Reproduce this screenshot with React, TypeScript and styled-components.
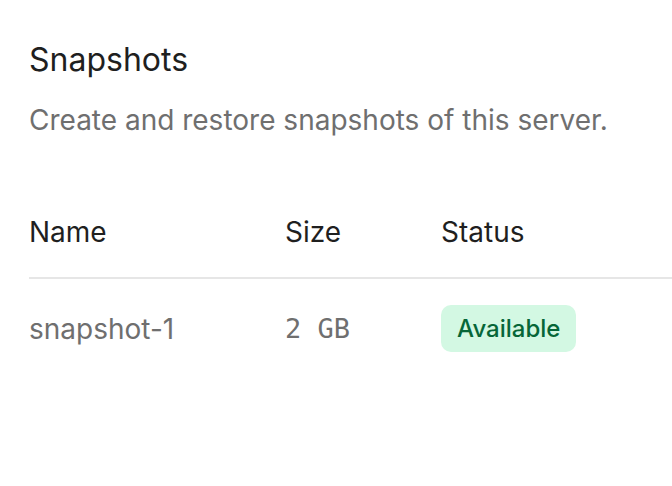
import styled, { createGlobalStyle } from 'styled-components'

const Global = createGlobalStyle`
  html, body {
    margin: 0;
    padding: 0;
    background: #ffffff;
  }
  body {
    font-family: Inter, "Noto Sans", sans-serif;
    -webkit-font-smoothing: antialiased;
  }
`

const snapshots = [
  { name: 'snapshot-1', size: '2 GB', status: 'Available' },
]

const Page = () => {
  return (
    <Wrapper>
      <Global />
      <Title>Snapshots</Title>
      <Description>Create and restore snapshots of this server.</Description>
      <Table>
        <thead>
          <tr>
            <Th $width={256}>Name</Th>
            <Th $width={156}>Size</Th>
            <Th>Status</Th>
          </tr>
        </thead>
        <tbody>
          {snapshots.map((s) => (
            <tr key={s.name}>
              <Td>{s.name}</Td>
              <Td $mono>{s.size}</Td>
              <Td>
                <Badge>{s.status}</Badge>
              </Td>
            </tr>
          ))}
        </tbody>
      </Table>
    </Wrapper>
  )
}

export default Page

const Wrapper = styled.main`
  padding: 40px 0 0 29px;
  width: 643px;
  overflow: hidden;
`

const Title = styled.h2`
  margin: 0;
  font-size: 32px;
  font-weight: 400;
  line-height: 40px;
  color: #1f1f1f;
`

const Description = styled.p`
  margin: 22px 0 0;
  font-size: 28px;
  line-height: 36px;
  color: #6f6f6f;
`

const Table = styled.table`
  margin-top: 76px;
  width: 700px;
  border-collapse: collapse;
  text-align: left;
`

const Th = styled.th<{ $width?: number }>`
  width: ${(p) => (p.$width ? `${p.$width}px` : 'auto')};
  padding: 0 0 27px;
  font-size: 28px;
  font-weight: 400;
  line-height: 36px;
  color: #1f1f1f;
  border-bottom: 2px solid #e6e6e6;
`

const Td = styled.td<{ $mono?: boolean }>`
  padding: 26px 0;
  font-size: ${(p) => (p.$mono ? '27px' : '28px')};
  line-height: 36px;
  color: #6f6f6f;
  font-family: ${(p) => (p.$mono ? '"DejaVu Sans Mono", "Liberation Mono", monospace' : 'inherit')};
  vertical-align: middle;
`

const Badge = styled.span`
  display: inline-block;
  padding: 5px 16px 5px 16px;
  border-radius: 10px;
  background: #d3f8e3;
  color: #066638;
  font-size: 24px;
  font-weight: 500;
  line-height: 37px;
`
